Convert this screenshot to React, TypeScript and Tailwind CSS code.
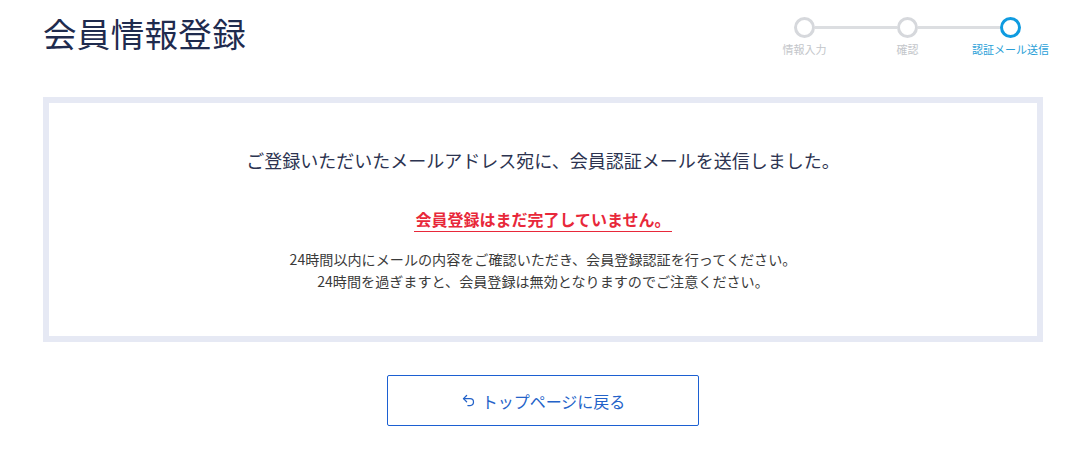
import React from 'react';
import { Undo2 } from 'lucide-react';

const steps = [
  { label: '情報入力', active: false },
  { label: '確認', active: false },
  { label: '認証メール送信', active: true },
];

const Stepper: React.FC = () => (
  <div className="flex items-start mt-[9px] mr-[22px]">
    {steps.map((step, i) => (
      <React.Fragment key={step.label}>
        {i > 0 && <div className="w-[82px] h-[3px] bg-[#dcdee1] mt-[9px]" />}
        <div className="flex flex-col items-center w-[21px]">
          <div
            className={`w-[21px] h-[21px] rounded-full border-[3px] bg-white ${
              step.active ? 'border-[#0f9be0]' : 'border-[#d6d8dc]'
            }`}
          />
          <span
            className={`mt-[3px] text-[11px] leading-[16px] whitespace-nowrap ${
              step.active ? 'text-[#2a9fd8]' : 'text-[#c3c6ca]'
            }`}
          >
            {step.label}
          </span>
        </div>
      </React.Fragment>
    ))}
  </div>
);

export default function App() {
  return (
    <div
      className="min-h-[455px] bg-white"
      style={{ fontFamily: '"Noto Sans CJK JP", "Noto Sans", sans-serif' }}
    >
      <div className="w-[1000px] ml-[43px] pt-[8px]">
        <div className="flex items-start justify-between">
          <h1 className="text-[33.5px] leading-[50px] text-[#1f2b4e] tracking-[0.01em]">会員情報登録</h1>
          <Stepper />
        </div>

        <div className="mt-[39px] border-[6px] border-[#e6e9f4] bg-white pt-[44px] pb-[44px] flex flex-col items-center">
          <p className="text-[18px] leading-[26px] text-[#2c3350]">
            ご登録いただいたメールアドレス宛に、会員認証メールを送信しました。
          </p>
          <p className="mt-[34px] text-[16px] leading-[24px] font-bold text-[#e8283a] border-b-[1.5px] border-[#e8283a] px-[1px]">
            会員登録はまだ完了していません。
          </p>
          <div className="mt-[16px] text-[14.1px] leading-[22px] text-[#3a3a3a] text-center">
            <p>24時間以内にメールの内容をご確認いただき、会員登録認証を行ってください。</p>
            <p>24時間を過ぎますと、会員登録は無効となりますのでご注意ください。</p>
          </div>
        </div>

        <div className="flex justify-center mt-[33px]">
          <button className="w-[312px] h-[51px] border border-[#1c60d2] rounded-[2px] flex items-center justify-center gap-[6px] text-[16px] text-[#2463c9]">
            <Undo2 className="w-[15px] h-[15px]" strokeWidth={2} />
            <span>トップページに戻る</span>
          </button>
        </div>
      </div>
    </div>
  );
}
